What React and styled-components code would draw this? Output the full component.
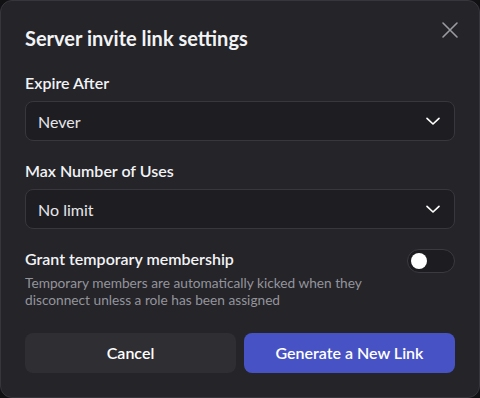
import React, { useState } from 'react';
import styled, { createGlobalStyle } from 'styled-components';

const GlobalStyle = createGlobalStyle`
  html, body {
    margin: 0;
    padding: 0;
    background: #111114;
  }
  * {
    box-sizing: border-box;
  }
`;

const Modal = styled.div`
  width: 480px;
  height: 398px;
  background-color: #242429;
  border: 1px solid #36363c;
  border-radius: 12px;
  padding: 22px 24px 24px 24px;
  font-family: Lato, 'Noto Sans', sans-serif;
  color: #f2f3f5;
  position: relative;
  display: flex;
  flex-direction: column;
`;

const Title = styled.h2`
  margin: 0;
  font-size: 20px;
  font-weight: 700;
  line-height: 30px;
`;

const CloseButton = styled.button`
  position: absolute;
  top: 17px;
  right: 17px;
  width: 24px;
  height: 24px;
  padding: 0;
  border: none;
  background: none;
  color: #9a9aa2;
  display: flex;
  align-items: center;
  justify-content: center;
  cursor: pointer;
`;

const Field = styled.div`
  margin-top: ${p => p.top}px;
  display: flex;
  flex-direction: column;
  gap: 8px;
`;

const Label = styled.div`
  font-size: 16px;
  font-weight: 600;
  line-height: 20px;
  color: #f2f3f5;
`;

const Select = styled.div`
  height: 40px;
  background-color: #1e1e22;
  border: 1px solid #37373d;
  border-radius: 8px;
  padding: 0 12px;
  display: flex;
  align-items: center;
  justify-content: space-between;
  font-size: 16px;
  color: #e6e6ea;
`;

const ToggleRow = styled.div`
  margin-top: 20px;
  display: flex;
  align-items: flex-start;
  justify-content: space-between;
`;

const ToggleText = styled.div`
  display: flex;
  flex-direction: column;
  gap: 5px;
`;

const Hint = styled.div`
  font-size: 13.7px;
  line-height: 17px;
  color: #94949c;
  width: 350px;
`;

const Switch = styled.button`
  width: 48px;
  height: 24px;
  border-radius: 12px;
  border: 1px solid #3a3a40;
  background-color: #1d1d21;
  padding: 0 3px;
  display: flex;
  align-items: center;
  cursor: pointer;
`;

const Knob = styled.span`
  width: 16px;
  height: 16px;
  border-radius: 50%;
  background: #ffffff;
`;

const Buttons = styled.div`
  margin-top: 25px;
  display: grid;
  grid-template-columns: 1fr 1fr;
  gap: 8px;
`;

const Button = styled.button`
  height: 40px;
  padding-bottom: 2px;
  border: none;
  border-radius: 8px;
  background-color: ${p => (p.primary ? '#4752c4' : '#2e2e33')};
  color: #ffffff;
  font-family: inherit;
  font-size: 16px;
  font-weight: 600;
  cursor: pointer;
`;

const Chevron = () => (
  <svg width="18" height="18" viewBox="0 0 24 24" fill="none">
    <path d="M4 8.5l8 7.5 8-7.5" stroke="#ffffff" strokeWidth="2.2" strokeLinecap="round" strokeLinejoin="round" />
  </svg>
);

export default function App() {
  const [on, setOn] = useState(false);
  return (
    <>
      <GlobalStyle />
      <Modal>
        <Title>Server invite link settings</Title>
        <CloseButton aria-label="Close">
          <svg width="18" height="18" viewBox="0 0 18 18">
            <path d="M2 2L16 16M16 2L2 16" stroke="currentColor" strokeWidth="1.6" strokeLinecap="round" />
          </svg>
        </CloseButton>

        <Field top={20}>
          <Label>Expire After</Label>
          <Select>
            <span>Never</span>
            <Chevron />
          </Select>
        </Field>

        <Field top={20}>
          <Label>Max Number of Uses</Label>
          <Select>
            <span>No limit</span>
            <Chevron />
          </Select>
        </Field>

        <ToggleRow>
          <ToggleText>
            <Label>Grant temporary membership</Label>
            <Hint>Temporary members are automatically kicked when they disconnect unless a role has been assigned</Hint>
          </ToggleText>
          <Switch onClick={() => setOn(!on)}>
            <Knob />
          </Switch>
        </ToggleRow>

        <Buttons>
          <Button>Cancel</Button>
          <Button primary>Generate a New Link</Button>
        </Buttons>
      </Modal>
    </>
  );
}
